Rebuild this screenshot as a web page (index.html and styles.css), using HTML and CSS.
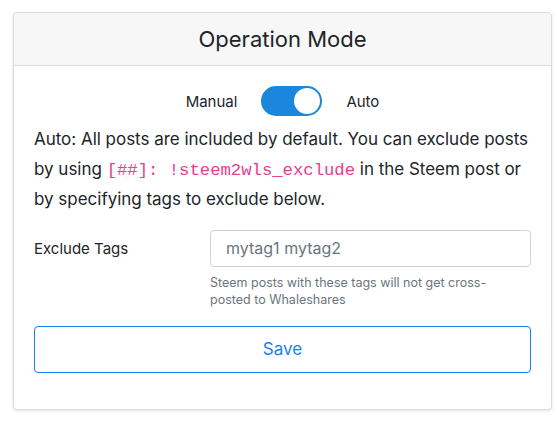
FILE: index.html
```html
<!DOCTYPE html>
<html>
<head>
<meta charset="utf-8">
<link rel="stylesheet" href="styles.css">
</head>
<body>
<div class="wrap">
  <div class="card">
    <div class="card-header">Operation Mode</div>
    <div class="card-body">
      <div class="mode-row">
        <span class="mode-label">Manual</span>
        <span class="switch"><span class="knob"></span></span>
        <span class="mode-label">Auto</span>
      </div>
      <p class="desc">Auto: All posts are included by default. You can exclude posts by using <code>[##]: !steem2wls_exclude</code> in the Steem post or by specifying tags to exclude below.</p>
      <div class="form-row">
        <label class="form-label">Exclude Tags</label>
        <div class="form-field">
          <input class="input" type="text" placeholder="mytag1 mytag2">
          <div class="help">Steem posts with these tags will not get cross-posted to Whaleshares</div>
        </div>
      </div>
      <button class="btn">Save</button>
    </div>
  </div>
</div>
</body>
</html>
```
FILE: styles.css
```css
* { box-sizing: border-box; }
html, body { margin: 0; background: #fff; }
body {
  font-family: "Inter", "Roboto", "Liberation Sans", sans-serif;
  color: #212529;
}
.wrap { padding: 12px 5px 13px 13px; }
.card {
  border: 1px solid #dcdcdc;
  border-radius: 4px;
  box-shadow: 0 1px 3px rgba(0,0,0,0.12);
  background: #fff;
}
.card-header {
  background: #f7f7f7;
  border-bottom: 1px solid #dcdcdc;
  border-radius: 4px 4px 0 0;
  text-align: center;
  font-size: 22px;
  line-height: 25px;
  height: 53px;
  padding-top: 14px;
}
.card-body { padding: 20px 20px 36px 20px; }
.mode-row {
  display: flex;
  justify-content: center;
  align-items: center;
  gap: 24px;
  height: 30px;
}
.mode-label { font-size: 15px; }
.switch {
  width: 61px;
  height: 30px;
  border-radius: 15px;
  background: #1a87dc;
  display: flex;
  align-items: center;
  justify-content: flex-end;
  padding-right: 2px;
}
.knob {
  width: 26px;
  height: 26px;
  border-radius: 50%;
  background: #fff;
}
.desc {
  margin: 9px 0 0 0;
  font-size: 17px;
  line-height: 29.5px;
  letter-spacing: -0.02px;
}
code {
  font-family: "Liberation Mono", "DejaVu Sans Mono", monospace;
  font-size: 17.3px;
  color: #e83e8c;
}
.form-row {
  display: flex;
  margin-top: 15px;
}
.form-label {
  width: 176px;
  font-size: 15px;
  line-height: 37px;
}
.form-field { flex: 1; }
.input {
  display: block;
  width: 100%;
  height: 37px;
  border: 1px solid #ced4da;
  border-radius: 4px;
  padding: 0 15px;
  font-family: inherit;
  font-size: 16px;
  color: #495057;
}
.input::placeholder { color: #6c757d; }
.help {
  margin-top: 7px;
  font-size: 12.5px;
  line-height: 17px;
  color: #6c757d;
  max-width: 295px;
}
.btn {
  display: block;
  width: 100%;
  height: 47px;
  margin-top: 18px;
  border: 1px solid #1a7ff5;
  border-radius: 4px;
  background: #fff;
  color: #1a7ff5;
  font-family: inherit;
  font-size: 17px;
}
```
